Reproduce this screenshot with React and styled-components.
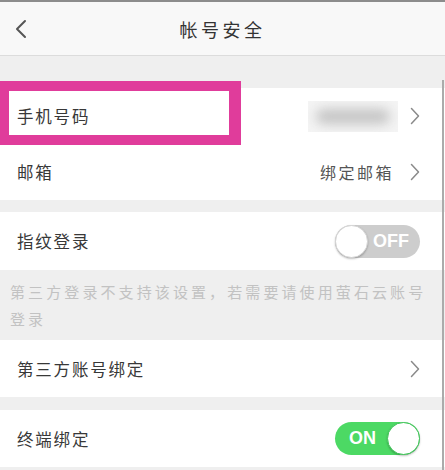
import React from 'react'
import styled, { createGlobalStyle } from 'styled-components'

const GlobalStyle = createGlobalStyle`
  html, body {
    margin: 0;
    padding: 0;
    background: #efefef;
  }
  body {
    font-family: "Noto Sans CJK SC", "Noto Sans", sans-serif;
    color: #333;
  }
`

const Page = styled.div`
  position: relative;
  width: 445px;
  height: 470px;
  overflow: hidden;
  background: #efefef;
`

const Header = styled.header`
  position: relative;
  display: flex;
  align-items: center;
  justify-content: center;
  height: 53px;
  background: #f8f8f8;
  border-top: 2px solid #8c8c8c;
  border-bottom: 1px solid #dcdcdc;
`

const BackButton = styled.button`
  position: absolute;
  left: 10px;
  top: 50%;
  transform: translateY(-50%);
  display: flex;
  padding: 4px;
  border: 0;
  background: none;
`

const Title = styled.h1`
  margin: 0;
  font-size: 18px;
  font-weight: 400;
  letter-spacing: 3.5px;
  color: #333;
`

const Group = styled.section`
  background: #fff;
  margin-top: ${p => p.$gap}px;
`

const Row = styled.div`
  position: relative;
  display: flex;
  align-items: center;
  height: ${p => p.$h || 56}px;
  padding: 0 25px 0 17px;
`

const Label = styled.span`
  position: relative;
  z-index: 2;
  flex: 1;
  font-size: 16.5px;
  font-weight: 400;
  letter-spacing: 1.8px;
  color: #383838;
`

const Value = styled.span`
  font-size: 16px;
  font-weight: 400;
  letter-spacing: 2.5px;
  color: #555;
  margin-right: 16px;
`

const Masked = styled.div`
  width: 90px;
  height: 31px;
  margin-right: 12px;
  background: #f4f4f4;
  display: flex;
  align-items: center;
  justify-content: center;
  overflow: hidden;

  &::after {
    content: '';
    width: 74px;
    height: 15px;
    border-radius: 8px;
    background: #c4c4c4;
    filter: blur(6px);
  }
`

const Highlight = styled.div`
  position: absolute;
  z-index: 1;
  left: 0;
  top: -7px;
  width: 241px;
  height: 64px;
  box-sizing: border-box;
  border: 10px solid #e03c9b;
  border-left-width: 9px;
  border-right-width: 12px;
`

const Note = styled.p`
  margin: 0;
  height: 70px;
  box-sizing: border-box;
  padding: 8px 8px 0 10px;
  font-size: 15px;
  font-weight: 400;
  line-height: 27px;
  letter-spacing: 3.1px;
  color: #c2c2c2;
`

const Track = styled.div`
  position: relative;
  width: 85px;
  height: 33px;
  border-radius: 17px;
  background: ${p => (p.$on ? '#4cd964' : '#cdcdcd')};
  display: flex;
  align-items: center;
  justify-content: ${p => (p.$on ? 'flex-start' : 'flex-end')};
  box-sizing: border-box;
  padding-left: ${p => (p.$on ? '14px' : '0')};
  padding-right: ${p => (p.$on ? '0' : '11px')};
`

const TrackText = styled.span`
  font-family: "Liberation Sans", Arial, sans-serif;
  font-weight: 700;
  font-size: 18px;
  color: #fff;
`

const Knob = styled.div`
  position: absolute;
  top: 0;
  ${p => (p.$on ? 'right: 0;' : 'left: 0;')}
  width: 33px;
  height: 33px;
  box-sizing: border-box;
  border-radius: 50%;
  background: #fff;
  border: 1px solid ${p => (p.$on ? '#3fc558' : '#d6d6d6')};
  box-shadow: 0 1px 2px rgba(0, 0, 0, 0.25);
`

const Scrollbar = styled.div`
  position: absolute;
  right: 1px;
  top: 80px;
  bottom: 0;
  width: 2px;
  background: #ababab;
`

const Chevron = () => (
  <svg width="10" height="18" viewBox="0 0 10 18">
    <path d="M1.5 1.5 L8.5 9 L1.5 16.5" fill="none" stroke="#8a8a8a" strokeWidth="1.5" strokeLinecap="round" strokeLinejoin="round"/>
  </svg>
)

const BackIcon = () => (
  <svg width="14" height="20" viewBox="0 0 14 20">
    <path d="M11 2 L3 10 L11 18" fill="none" stroke="#555" strokeWidth="2" strokeLinecap="round" strokeLinejoin="round"/>
  </svg>
)

const Toggle = ({ on }) => (
  <Track $on={on}>
    <TrackText>{on ? 'ON' : 'OFF'}</TrackText>
    <Knob $on={on}/>
  </Track>
)

export default function App() {
  return (
    <Page>
      <GlobalStyle/>
      <Header>
        <BackButton><BackIcon/></BackButton>
        <Title>帐号安全</Title>
      </Header>

      <Group $gap={32}>
        <Row>
          <Highlight/>
          <Label>手机号码</Label>
          <Masked/>
          <Chevron/>
        </Row>
        <Row>
          <Label>邮箱</Label>
          <Value>绑定邮箱</Value>
          <Chevron/>
        </Row>
      </Group>

      <Group $gap={12}>
        <Row $h={58}>
          <Label>指纹登录</Label>
          <Toggle on={false}/>
        </Row>
      </Group>
      <Note>第三方登录不支持该设置，若需要请使用萤石云账号登录</Note>

      <Group $gap={0}>
        <Row $h={57}>
          <Label>第三方账号绑定</Label>
          <Chevron/>
        </Row>
      </Group>

      <Group $gap={13}>
        <Row $h={57}>
          <Label>终端绑定</Label>
          <Toggle on={true}/>
        </Row>
      </Group>

      <Scrollbar/>
    </Page>
  )
}
